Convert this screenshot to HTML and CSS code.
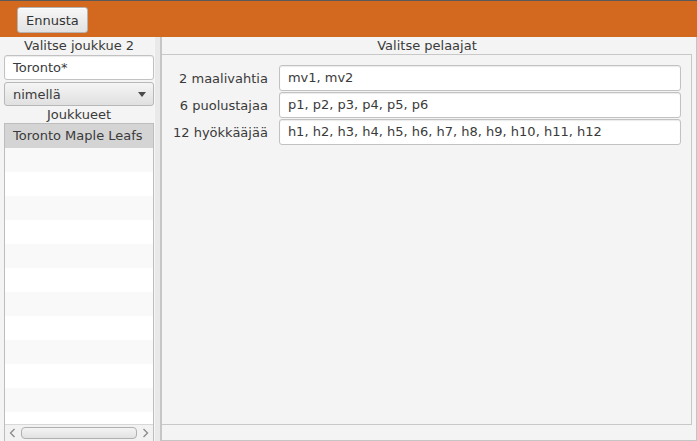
FILE: index.html
```html
<!DOCTYPE html>
<html lang="fi">
<head>
<meta charset="utf-8">
<title>Ennusta</title>
<link rel="stylesheet" href="styles.css">
</head>
<body>
<div class="app">
  <div class="toolbar">
    <button class="btn">Ennusta</button>
  </div>
  <div class="main">
    <div class="left">
      <div class="caption">Valitse joukkue 2</div>
      <div class="field">Toronto*</div>
      <div class="combo"><span>nimellä</span><span class="arrow"></span></div>
      <div class="caption">Joukkueet</div>
      <div class="list">
        <div class="rows">
          <div class="row selected">Toronto Maple Leafs</div>
          <div class="row"></div><div class="row"></div><div class="row"></div>
          <div class="row"></div><div class="row"></div><div class="row"></div>
          <div class="row"></div><div class="row"></div><div class="row"></div>
          <div class="row"></div><div class="row"></div><div class="row"></div>
        </div>
        <div class="hscroll">
          <span class="sarrow">
            <svg width="7" height="10" viewBox="0 0 7 10"><path d="M5.5 1 L1.5 5 L5.5 9" fill="none" stroke="#8a8a8a" stroke-width="1.3"/></svg>
          </span>
          <span class="thumb"></span>
          <span class="sarrow">
            <svg width="7" height="10" viewBox="0 0 7 10"><path d="M1.5 1 L5.5 5 L1.5 9" fill="none" stroke="#8a8a8a" stroke-width="1.3"/></svg>
          </span>
        </div>
      </div>
    </div>
    <div class="divider"></div>
    <div class="right">
      <div class="caption">Valitse pelaajat</div>
      <div class="box">
        <div class="form">
          <div class="lbl">2 maalivahtia</div>
          <div class="field wide">mv1, mv2</div>
          <div class="lbl">6 puolustajaa</div>
          <div class="field wide">p1, p2, p3, p4, p5, p6</div>
          <div class="lbl">12 hyökkääjää</div>
          <div class="field wide">h1, h2, h3, h4, h5, h6, h7, h8, h9, h10, h11, h12</div>
        </div>
      </div>
    </div>
  </div>
</div>
</body>
</html>
```
FILE: styles.css
```css
html, body {
  margin: 0;
  padding: 0;
  background: #f4f4f4;
}
.app {
  width: 697px;
  height: 441px;
  display: flex;
  flex-direction: column;
  font-family: "DejaVu Sans", "Liberation Sans", sans-serif;
  font-size: 13px;
  color: #3a3a3a;
  overflow: hidden;
}
.toolbar {
  border-top: 1px solid #5a5a5a;
  background: #d2691e;
  display: flex;
  align-items: flex-start;
  padding: 6px 0 0 17px;
  box-sizing: border-box;
  height: 37px;
  flex: none;
}
.btn {
  height: 26px;
  padding: 0 8px;
  font: inherit;
  color: #333;
  border: 1px solid #b4b4b4;
  border-radius: 3px;
  background: linear-gradient(#f7f7f7, #e2e2e2);
  box-shadow: inset 0 1px 0 #ffffff;
}
.main {
  flex: 1;
  display: flex;
  min-height: 0;
}
.left {
  width: 150px;
  padding-left: 4px;
  display: flex;
  flex-direction: column;
  flex: none;
}
.caption {
  height: 17px;
  line-height: 17px;
  text-align: center;
  flex: none;
}
.field {
  height: 25px;
  box-sizing: border-box;
  background: #ffffff;
  border: 1px solid #c2c2c2;
  border-radius: 3px;
  box-shadow: inset 0 1px 1px #ececec;
  padding-left: 8px;
  line-height: 23px;
  white-space: nowrap;
}
.left .field {
  margin-top: 1px;
}
.combo {
  margin-top: 2px;
  height: 24px;
  box-sizing: border-box;
  border: 1px solid #b8b8b8;
  border-radius: 3px;
  background: linear-gradient(#f5f5f5, #e0e0e0);
  display: flex;
  align-items: center;
  justify-content: space-between;
  padding: 0 7px 0 8px;
}
.arrow {
  width: 0;
  height: 0;
  border-left: 4.5px solid transparent;
  border-right: 4.5px solid transparent;
  border-top: 5px solid #4a4a4a;
}
.list {
  flex: 1;
  border: 1px solid #bdbdbd;
  border-bottom: none;
  background: #ffffff;
  display: flex;
  flex-direction: column;
  min-height: 0;
}
.rows {
  flex: 1;
  overflow: hidden;
}
.row {
  height: 24px;
  line-height: 24px;
  padding-left: 8px;
  background: #ffffff;
}
.row:nth-child(even) {
  background: #f9f9f9;
}
.row.selected {
  background: #d4d4d4;
}
.hscroll {
  height: 16px;
  flex: none;
  background: #f2f2f2;
  border-top: 1px solid #d8d8d8;
  display: flex;
  align-items: center;
  padding: 0 3px;
  gap: 4px;
}
.sarrow {
  width: 9px;
  display: flex;
  justify-content: center;
}
.thumb {
  flex: 1;
  height: 10px;
  border: 1px solid #b0b0b0;
  border-radius: 4px;
  background: linear-gradient(#f4f4f4, #e2e2e2);
}
.divider {
  width: 8px;
  flex: none;
  background: #e9e9e9;
  border-left: 1px solid #f6f6f6;
  border-right: 2px solid #c6c6c6;
  box-sizing: border-box;
}
.right {
  flex: 1;
  display: flex;
  flex-direction: column;
  border-right: 1px solid #c4c4c4;
  border-bottom: 1px solid #c4c4c4;
  padding-right: 4px;
  padding-bottom: 15px;
}
.box {
  flex: 1;
  border: 1px solid #c8c8c8;
  border-left: none;
  padding: 10px 10px 0 11px;
}
.form {
  display: grid;
  grid-template-columns: auto 1fr;
  column-gap: 11px;
  row-gap: 1px;
  align-items: center;
}
.lbl {
  text-align: right;
}
.field.wide {
  height: 26px;
  line-height: 24px;
}
```
